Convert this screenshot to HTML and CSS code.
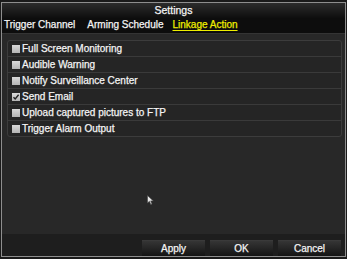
FILE: index.html
```html
<!DOCTYPE html>
<html lang="en">
<head>
    <meta charset="UTF-8">
    <title>Settings</title>
    <link rel="stylesheet" href="styles.css">
</head>
<body>
    <div class="dialog">
        <div class="title">Settings</div>

        <div class="tabs">
            <span class="tab">Trigger Channel</span>
            <span class="tab">Arming Schedule</span>
            <span class="tab active">Linkage Action</span>
        </div>

        <div class="content">
            <ul class="action-list">
                <li class="action"><span class="check"></span>Full Screen Monitoring</li>
                <li class="action"><span class="check"></span>Audible Warning</li>
                <li class="action"><span class="check"></span>Notify Surveillance Center</li>
                <li class="action"><span class="check checked"><svg viewBox="0 0 8 8" width="8" height="8"><path d="M1.5 4.2 L3.2 6 L6.6 1.8" fill="none" stroke="#222" stroke-width="1.4"/></svg></span>Send Email</li>
                <li class="action"><span class="check"></span>Upload captured pictures to FTP</li>
                <li class="action"><span class="check"></span>Trigger Alarm Output</li>
            </ul>
        </div>

        <div class="buttons">
            <button class="btn">Apply</button>
            <button class="btn">OK</button>
            <button class="btn">Cancel</button>
        </div>
    </div>

    <!-- mouse pointer -->
    <svg class="cursor" viewBox="0 0 7 11" width="7" height="11">
        <path d="M0.5 0.5 L0.5 8 L2.4 6.3 L3.8 9.6 L5 9 L3.7 5.9 L6.3 5.9 Z" fill="#e8e8e8" stroke="#444" stroke-width="0.6"/>
    </svg>
</body>
</html>
```

FILE: styles.css
```css
body {
    margin: 0;
    padding: 2px 0 0 1px;
    background: #1a1a1a;
    font-family: 'Liberation Sans', Arial, sans-serif;
    font-size: 10px;
    color: #f4f4f4;
    -webkit-text-stroke: 0.25px;
}

.dialog {
    width: 343px;
    height: 253px;
    border: 1px solid #8e8e8e;
    display: flex;
    flex-direction: column;
    background: #282828;
}

.title {
    height: 15px;
    line-height: 15px;
    text-align: center;
    font-size: 10.5px;
    background: linear-gradient(#2c2c2c, #0e0e0e);
}

.tabs {
    height: 15px;
    line-height: 14px;
    background: #0d0d0d;
    border-bottom: 1px solid #343434;
    display: flex;
    padding-left: 2px;
}

.tab {
    margin-right: 12px;
}

.tab:nth-child(2) {
    margin-right: 9px;
}

.tab.active {
    color: #eeee00;
    text-decoration: underline;
    text-underline-offset: 2px;
}

.content {
    flex: 1;
    padding: 6px 3px 0 5px;
}

.action-list {
    list-style: none;
    margin: 0;
    padding: 0;
    border: 1px solid #3c3c3c;
    border-radius: 3px;
    background: #252525;
}

.action {
    height: 15px;
    line-height: 15px;
    border-bottom: 1px solid #3a3a3a;
    display: flex;
    align-items: center;
    padding-left: 4px;
}

.action:last-child {
    border-bottom: none;
}

.check {
    width: 8px;
    height: 8px;
    background: linear-gradient(#d8d8d8, #b4b4b4);
    margin-right: 2px;
    display: flex;
}

.buttons {
    height: 16px;
    padding: 6px 4px 0 0;
    background: #1e1e1e;
    display: flex;
    justify-content: flex-end;
    gap: 5px;
}

.btn {
    width: 63px;
    height: 16px;
    padding: 0;
    border: none;
    border-top: 1px solid #3a3a3a;
    background: linear-gradient(#353535, #141414);
    color: #f4f4f4;
    font-family: inherit;
    font-size: 10px;
    -webkit-text-stroke: 0.25px;
}

.cursor {
    position: absolute;
    left: 147px;
    top: 195px;
}
```
